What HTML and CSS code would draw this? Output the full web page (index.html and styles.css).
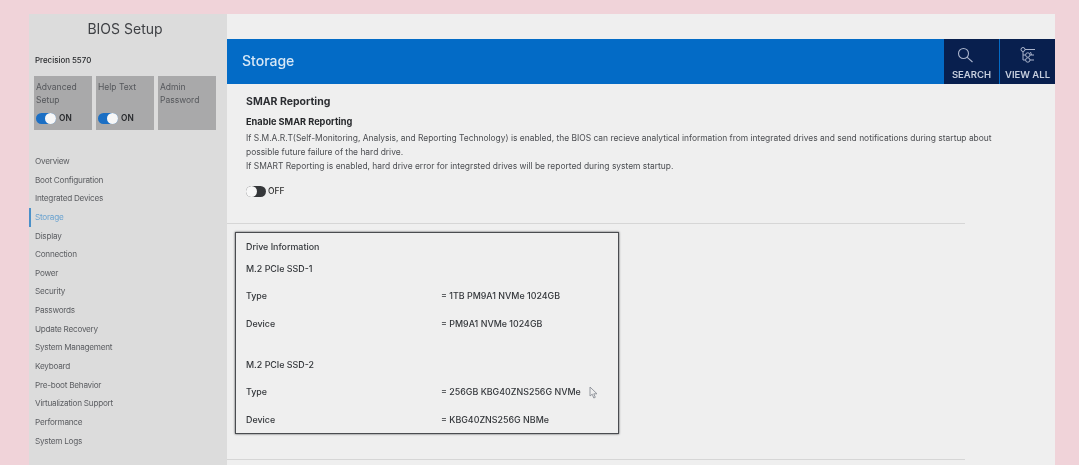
FILE: index.html
```html
<!DOCTYPE html>
<html lang="en">
<head>
<meta charset="utf-8">
<title>BIOS Setup</title>
<link rel="stylesheet" href="styles.css">
</head>
<body>
<div class="app">
  <aside class="side">
    <h1 class="side-title">BIOS Setup</h1>
    <div class="model">Precision 5570</div>
    <div class="tiles">
      <div class="tile"><div class="tile-label">Advanced Setup</div><div class="tile-toggle"><span class="sw-on"><span class="knob"></span></span><b>ON</b></div></div>
      <div class="tile"><div class="tile-label">Help Text</div><div class="tile-toggle"><span class="sw-on"><span class="knob"></span></span><b>ON</b></div></div>
      <div class="tile"><div class="tile-label">Admin Password</div></div>
    </div>
    <nav class="nav">
      <a>Overview</a><a>Boot Configuration</a><a>Integrated Devices</a><a class="active">Storage</a><a>Display</a><a>Connection</a><a>Power</a><a>Security</a><a>Passwords</a><a>Update Recovery</a><a>System Management</a><a>Keyboard</a><a>Pre-boot Behavior</a><a>Virtualization Support</a><a>Performance</a><a>System Logs</a>
    </nav>
  </aside>
  <main class="main">
    <header class="bar">
      <h2 class="bar-title">Storage</h2>
      <div class="bar-btn">
        <svg class="icon-search" width="16" height="16" viewBox="0 0 16 16" fill="none" stroke="#aab4cc" stroke-width="1.1"><circle cx="6.500" cy="6.500" r="5"/><path d="M10 10.200L15.500 15"/></svg>
        <span>SEARCH</span>
      </div>
      <div class="bar-btn">
        <svg width="16" height="16" viewBox="0 0 16 16" fill="none" stroke="#aab4cc" stroke-width="1"><circle cx="3" cy="2.500" r="2"/><path d="M5 2.500H15M3 4.500V13H5.500M3 8H5.500"/><circle cx="7.800" cy="8" r="2.200"/><circle cx="7.800" cy="13" r="2.200"/><path d="M10 8H14M10 13H14M11.500 8L10.500 5"/></svg>
        <span>VIEW ALL</span>
      </div>
    </header>
    <section class="smar">
      <h3 class="smar-title">SMAR Reporting</h3>
      <h4 class="smar-sub">Enable SMAR Reporting</h4>
      <p class="smar-text">If S.M.A.R.T(Self-Monitoring, Analysis, and Reporting Technology) is enabled, the BIOS can recieve analytical information from integrated drives and send notifications during startup about possible future failure of the hard drive.<br>If SMART Reporting is enabled, hard drive error for integrsted drives will be reported during system startup.</p>
      <div class="off"><span class="sw-off"><span class="knob"></span></span><span>OFF</span></div>
    </section>
    <hr class="rule">
    <section class="drive">
      <div class="dl-head">Drive Information</div>
      <div class="dl-head dl-ssd">M.2 PCIe SSD-1</div>
      <div class="dl-row dl-first"><span class="dl-k">Type</span><span>= 1TB PM9A1 NVMe 1024GB</span></div>
      <div class="dl-row"><span class="dl-k">Device</span><span>= PM9A1 NVMe 1024GB</span></div>
      <div class="dl-head dl-ssd2">M.2 PCIe SSD-2</div>
      <div class="dl-row dl-first"><span class="dl-k">Type</span><span>= 256GB KBG40ZNS256G NVMe</span></div>
      <div class="dl-row"><span class="dl-k">Device</span><span>= KBG40ZNS256G NBMe</span></div>
      <svg class="cursor" width="9" height="13" viewBox="0 0 9 13" fill="#eee" stroke="#8a8f96" stroke-width="0.9"><path d="M1 1V10L3.200 8.200L4.800 12L6.300 11.300L4.800 7.800H8Z"/></svg>
    </section>
    <hr class="rule rule2">
  </main>
</div>
</body>
</html>
```
FILE: styles.css
```css
* { box-sizing: border-box; }
html, body { margin: 0; height: 100%; overflow: hidden; }
body {
  background: #f0d3d9;
  font-family: "Inter", "Liberation Sans", sans-serif;
  color: #33363a;
  padding: 14px 24px 0 29px;
}
.app { display: flex; height: 451px; filter: blur(0.3px); }
.side { width: 198px; flex: none; background: #dcdcdc; padding: 0 0 0 6px; }
.side-title { margin: 0; padding-top: 5px; width: 180px; text-align: center; font-size: 14px; line-height: 20px; font-weight: 400; color: #3f4145; }
.model { margin-top: 16px; font-size: 7.900px; line-height: 11px; font-weight: 500; color: #26282b; }
.tiles { display: flex; gap: 4px; margin-top: 10px; margin-left: -1px; }
.tile { width: 58px; height: 54px; background: #a9a9aa; padding: 5px 2px; position: relative; }
.tile-label { font-size: 8.500px; line-height: 13px; color: #55575b; }
.tile-toggle { position: absolute; left: 2px; top: 37px; display: flex; align-items: center; gap: 3px; font-size: 8.300px; line-height: 11px; color: #26282b; }
.tile-toggle b { font-weight: 600; }
.sw-on { display: flex; justify-content: flex-end; align-items: center; width: 20px; height: 11px; border-radius: 6px; background: #1b6fc4; }
.knob { display: block; width: 11px; height: 11px; border-radius: 50%; background: #f7f7f7; }
.nav { display: flex; flex-direction: column; margin-top: 22px; margin-left: -6px; }
.nav a { display: block; height: 18.650px; line-height: 18.650px; font-size: 8.200px; letter-spacing: -0.26px; color: #5c5e62; padding-left: 6px; }
.nav a.active { color: #6ba3d0; border-left: 2px solid #4a90c8; padding-left: 4px; }
.main { width: 828px; flex: none; background: #efefef; }
.bar { display: flex; align-items: stretch; height: 45px; margin-top: 25px; background: #036bc6; gap: 1px; }
.bar-title { flex: 1; margin: 0; padding-left: 15px; font-size: 14px; line-height: 43px; font-weight: 500; color: #d8e8f6; }
.bar-btn { width: 55px; background: #081f4e; display: flex; flex-direction: column; align-items: center; padding-top: 8px; font-size: 9.500px; font-weight: 600; color: #c6cede; }
.bar-btn span { margin-top: 6px; line-height: 12px; }
.icon-search { margin-right: 14px; }
.smar { padding: 11px 50px 0 19px; height: 139px; }
.smar-title { margin: 0; font-size: 10.500px; line-height: 13px; font-weight: 700; color: #2c2e32; }
.smar-sub { margin: 8px 0 0; font-size: 9.200px; line-height: 12px; font-weight: 700; color: #26282b; }
.smar-text { margin: 3px 0 0; font-size: 8.440px; line-height: 14px; color: #4c4e52; }
.off { display: flex; align-items: center; gap: 2px; margin-top: 13px; font-size: 8.500px; line-height: 11px; font-weight: 500; color: #333; }
.sw-off { display: flex; align-items: center; width: 20px; height: 11px; border-radius: 6px; background: #35373a; }
.rule { margin: 0; border: 0; height: 1px; width: 738px; background: #d6d6d6; }
.drive { position: relative; margin: 8px 0 0 8px; width: 384px; height: 202px; border: 1px solid #4a4c50; box-shadow: 0 0 2px #4a4c50; padding: 8px 10px 0; font-size: 8.900px; color: #33363a; }
.dl-head { line-height: 12px; font-weight: 500; }
.dl-ssd { margin-top: 10px; }
.dl-ssd2 { margin-top: 29px; }
.dl-row { display: flex; margin-top: 16px; line-height: 12px; font-weight: 500; }
.dl-row.dl-first { margin-top: 15px; }
.dl-k { width: 195px; flex: none; }
.cursor { position: absolute; left: 353px; top: 153px; }
.rule2 { margin-top: 25px; }
```
